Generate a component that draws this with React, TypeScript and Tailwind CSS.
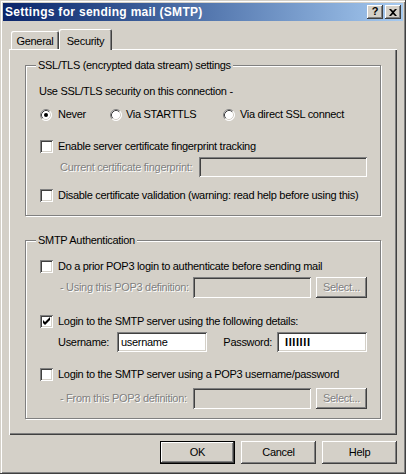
import React from "react";

// classic 3D bevels
const raised =
  "shadow-[inset_-1px_-1px_0_#404040,inset_1px_1px_0_#fff,inset_-2px_-2px_0_#808080]";
const sunken =
  "shadow-[inset_1px_1px_0_#808080,inset_-1px_-1px_0_#fff,inset_2px_2px_0_#404040,inset_-2px_-2px_0_#d4d0c8]";
const disabledText = "text-[#808080] [text-shadow:1px_1px_0_#fff]";

const CheckBox: React.FC<{ checked?: boolean }> = ({ checked }) => (
  <div className={`w-[13px] h-[13px] bg-white shrink-0 ${sunken}`}>
    {checked && (
      <svg width="13" height="13" viewBox="0 0 13 13">
        <path d="M3 5 L3 8 L5 10 L10 5 L10 2 L5 7 Z" fill="#000" />
      </svg>
    )}
  </div>
);

const Radio: React.FC<{ checked?: boolean }> = ({ checked }) => (
  <svg width="12" height="12" viewBox="0 0 12 12" className="shrink-0">
    <circle cx="6" cy="6" r="5.5" fill="#fff" />
    <path d="M2.11 9.89 A5.5 5.5 0 0 1 9.89 2.11" stroke="#808080" fill="none" />
    <path d="M9.89 2.11 A5.5 5.5 0 0 1 2.11 9.89" stroke="#fff" fill="none" />
    <path d="M2.82 9.18 A4.5 4.5 0 0 1 9.18 2.82" stroke="#404040" fill="none" />
    <path d="M9.18 2.82 A4.5 4.5 0 0 1 2.82 9.18" stroke="#d4d0c8" fill="none" />
    {checked && <circle cx="6" cy="6" r="2" fill="#000" />}
  </svg>
);

const Field: React.FC<{ w: string; disabled?: boolean; h?: string; children?: React.ReactNode }> = ({
  w,
  disabled,
  h = "h-[20px]",
  children,
}) => (
  <div
    className={`${w} ${h} ${disabled ? "bg-[#d4d0c8]" : "bg-white"} ${sunken} flex items-center px-[4px] shrink-0`}
  >
    {children}
  </div>
);

const Button: React.FC<{ label: string; w?: string; h?: string; disabled?: boolean; isDefault?: boolean }> = ({
  label,
  w = "w-[75px]",
  h = "h-[23px]",
  disabled,
  isDefault,
}) => (
  <div className={`${w} ${h} shrink-0 ${isDefault ? "border border-black" : ""}`}>
    <div className={`w-full h-full flex items-center justify-center ${raised} ${disabled ? disabledText : "text-black"}`}>
      {label}
    </div>
  </div>
);

const GroupBox: React.FC<{ title: string; h: string; className?: string; children: React.ReactNode }> = ({
  title,
  h,
  className = "",
  children,
}) => (
  <div
    className={`relative ${h} border border-[#808080] shadow-[1px_1px_0_#fff,inset_1px_1px_0_#fff] ${className}`}
  >
    <span className="absolute -top-[7px] left-[10px] px-[2px] bg-[#d4d0c8] leading-[13px]">{title}</span>
    <div className="px-[13px]">{children}</div>
  </div>
);

const CheckRow: React.FC<{ label: string; checked?: boolean; className?: string }> = ({
  label,
  checked,
  className = "",
}) => (
  <div className={`flex items-center h-[13px] pl-[1px] ${className}`}>
    <CheckBox checked={checked} />
    <span className="ml-[5px] leading-[13px] whitespace-nowrap">{label}</span>
  </div>
);

export default function App() {
  return (
    <div
      className="w-[406px] h-[474px] bg-[#d4d0c8] p-[3px] text-[11px] tracking-[-0.3px] text-black overflow-hidden shadow-[inset_-1px_-1px_0_#404040,inset_1px_1px_0_#d4d0c8,inset_2px_2px_0_#fff,inset_-2px_-2px_0_#808080]"
      style={{ fontFamily: '"Liberation Sans", Arial, sans-serif' }}
    >
      {/* Title bar */}
      <div className="h-[18px] flex items-center bg-gradient-to-r from-[#0a246a] to-[#a6caf0] pl-[2px] pr-[2px]">
        <span className="text-white font-bold text-[12px] tracking-[0.3px] whitespace-nowrap">
          Settings for sending mail (SMTP)
        </span>
        <div className="ml-auto flex gap-[2px]">
          <div className={`w-[16px] h-[14px] bg-[#d4d0c8] flex items-center justify-center ${raised}`}>
            <span className="font-bold text-[11px] leading-none -mt-px">?</span>
          </div>
          <div className={`w-[16px] h-[14px] bg-[#d4d0c8] flex items-center justify-center ${raised}`}>
            <svg width="8" height="7" viewBox="0 0 8 7">
              <path d="M0 0 L2 0 L4 2 L6 0 L8 0 L5 3.5 L8 7 L6 7 L4 5 L2 7 L0 7 L3 3.5 Z" fill="#000" />
            </svg>
          </div>
        </div>
      </div>

      <div className="px-[6px] pt-[8px]">
        {/* Tabs */}
        <div className="h-[20px] flex items-end pl-[2px]">
          <div className="h-[18px] w-[48px] flex items-center justify-center rounded-t-[2px] shadow-[inset_1px_1px_0_#fff,inset_-1px_0_0_#404040,inset_-2px_0_0_#808080]">
            <span className="pt-[3px]">General</span>
          </div>
          <div className="relative z-10 -mb-px h-[21px] w-[53px] bg-[#d4d0c8] flex items-start justify-center pt-[4px] rounded-t-[2px] shadow-[inset_1px_1px_0_#fff,inset_-1px_0_0_#404040,inset_-2px_0_0_#808080]">
            <span>Security</span>
          </div>
        </div>

        {/* Tab panel */}
        <div className="h-[386px] px-[16px] pt-[16px] shadow-[inset_1px_1px_0_#fff,inset_-1px_-1px_0_#404040,inset_-2px_-2px_0_#808080]">
          <GroupBox title="SSL/TLS (encrypted data stream) settings" h="h-[151px]">
            <div className="pt-[19px] h-[32px] leading-[13px] whitespace-nowrap">
              Use SSL/TLS security on this connection -
            </div>
            <div className="mt-[10px] h-[13px] flex items-center pl-[1px]">
              <div className="w-[70px] flex items-center">
                <Radio checked />
                <span className="ml-[6px]">Never</span>
              </div>
              <div className="w-[113px] flex items-center">
                <Radio />
                <span className="ml-[4px]">Via STARTTLS</span>
              </div>
              <div className="flex items-center">
                <Radio />
                <span className="ml-[5px] whitespace-nowrap">Via direct SSL connect</span>
              </div>
            </div>
            <CheckRow label="Enable server certificate fingerprint tracking" className="mt-[19px]" />
            <div className="mt-[4px] h-[20px] flex items-center">
              <span className={`pl-[21px] whitespace-nowrap ${disabledText}`}>Current certificate fingerprint:</span>
              <div className="ml-auto">
                <Field w="w-[168px]" disabled />
              </div>
            </div>
            <CheckRow
              label="Disable certificate validation (warning: read help before using this)"
              className="mt-[12px]"
            />
          </GroupBox>

          <GroupBox title="SMTP Authentication" h="h-[179px]" className="mt-[24px]">
            <CheckRow label="Do a prior POP3 login to authenticate before sending mail" className="mt-[19px]" />
            <div className="mt-[4px] h-[21px] flex items-center">
              <span className={`pl-[21px] whitespace-nowrap ${disabledText}`}>- Using this POP3 definition:</span>
              <div className="ml-auto flex items-center gap-[5px]">
                <Field w="w-[118px]" h="h-[21px]" disabled />
                <Button label="Select..." w="w-[51px]" h="h-[21px]" disabled />
              </div>
            </div>
            <CheckRow label="Login to the SMTP server using the following details:" checked className="mt-[17px]" />
            <div className="mt-[4px] h-[20px] flex items-center">
              <span className="pl-[19px] w-[78px] whitespace-nowrap">Username:</span>
              <Field w="w-[90px]">
                <span className="leading-none">username</span>
              </Field>
              <div className="ml-auto flex items-center">
                <span className="mr-[5px]">Password:</span>
                <Field w="w-[90px]">
                  <span className="font-bold text-[11px] leading-none tracking-[0.6px] pl-[4px]">IIIIIII</span>
                </Field>
              </div>
            </div>
            <CheckRow
              label="Login to the SMTP server using a POP3 username/password"
              className="mt-[16px]"
            />
            <div className="mt-[7px] h-[21px] flex items-center">
              <span className={`pl-[21px] whitespace-nowrap ${disabledText}`}>- From this POP3 definition:</span>
              <div className="ml-auto flex items-center gap-[5px]">
                <Field w="w-[118px]" h="h-[21px]" disabled />
                <Button label="Select..." w="w-[51px]" h="h-[21px]" disabled />
              </div>
            </div>
          </GroupBox>
        </div>

        {/* Dialog buttons */}
        <div className="mt-[6px] flex justify-end gap-[6px]">
          <Button label="OK" isDefault />
          <Button label="Cancel" />
          <Button label="Help" />
        </div>
      </div>
    </div>
  );
}
